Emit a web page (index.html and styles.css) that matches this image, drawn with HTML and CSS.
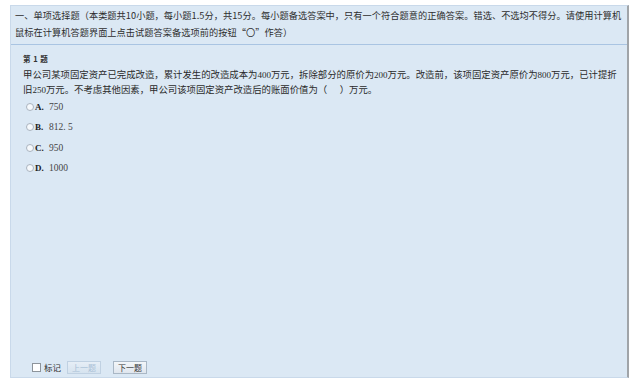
FILE: index.html
```html
<!DOCTYPE html>
<html lang="zh">
<head>
<meta charset="utf-8">
<link rel="stylesheet" href="styles.css">
</head>
<body>
<div class="panel">
  <div class="header">一、单项选择题（本类题共10小题，每小题1.5分，共15分。每小题备选答案中，只有一个符合题意的正确答案。错选、不选均不得分。请使用计算机<br>鼠标在计算机答题界面上点击试题答案备选项前的按钮“〇”作答）</div>
  <div class="content">
    <div class="qno">第 1 题</div>
    <div class="qtext">甲公司某项固定资产已完成改造，累计发生的改造成本为<span class="num">400</span>万元，拆除部分的原价为<span class="num">200</span>万元。改造前，该项固定资产原价为<span class="num">800</span>万元，已计提折<br>旧<span class="num">250</span>万元。不考虑其他因素，甲公司该项固定资产改造后的账面价值为（&nbsp;&nbsp;&nbsp;&nbsp;&nbsp;&nbsp;）万元。</div>
    <div class="options">
      <div class="opt"><span class="radio"></span><b class="letter">A.</b><span class="val">750</span></div>
      <div class="opt"><span class="radio"></span><b class="letter">B.</b><span class="val">812. 5</span></div>
      <div class="opt"><span class="radio"></span><b class="letter">C.</b><span class="val">950</span></div>
      <div class="opt"><span class="radio"></span><b class="letter">D.</b><span class="val">1000</span></div>
    </div>
  </div>
  <div class="footer">
    <span class="check"></span><span class="mark">标记</span>
    <span class="btn disabled">上一题</span>
    <span class="btn">下一题</span>
  </div>
</div>
</body>
</html>
```

FILE: styles.css
```css
html, body {
  margin: 0;
  padding: 0;
  background: #ffffff;
}
body {
  width: 640px;
  height: 385px;
  overflow: hidden;
  font-family: "Noto Sans CJK SC", "Liberation Sans", sans-serif;
  color: #333333;
}
.panel {
  box-sizing: border-box;
  margin: 5px 11px 0 10px;
  height: 373px;
  background: #dbe8f4;
  border: 1px solid #c9d9ea;
  border-right: 2px solid #a0a4a8;
  display: flex;
  flex-direction: column;
}
.header {
  font-size: 9.2px;
  line-height: 17px;
  padding: 1px 4px 3px 4px;
  letter-spacing: 0.05px;
  border-bottom: 1px solid #a9c4e2;
  white-space: nowrap;
  color: #2e2e2e;
}
.content {
  padding: 7px 12px 0 12px;
}
.qno {
  font-size: 7.5px;
  font-weight: bold;
  line-height: 14px;
  word-spacing: 1px;
}
.qtext {
  margin-top: 1px;
  font-size: 9.4px;
  line-height: 14px;
  white-space: nowrap;
  color: #2a2a2a;
}
.num {
  font-family: "Liberation Serif", serif;
  font-size: 9px;
}
.options {
  margin-top: 4px;
  display: flex;
  flex-direction: column;
  gap: 8.3px;
  padding-left: 3px;
}
.opt {
  display: flex;
  align-items: center;
  height: 12px;
  font-size: 9px;
}
.radio {
  width: 6px;
  height: 6px;
  border: 1px solid #aab4bf;
  border-radius: 50%;
  background: #f6f9fc;
  margin-right: 1px;
}
.letter {
  font-family: "Liberation Serif", serif;
  font-size: 9px;
  width: 14px;
  color: #222;
}
.val {
  font-family: "Liberation Serif", serif;
  font-size: 9.5px;
  color: #444;
}
.footer {
  margin-top: auto;
  display: flex;
  align-items: center;
  padding: 0 0 3px 21px;
  height: 14px;
  font-size: 8.5px;
}
.check {
  width: 7px;
  height: 7px;
  border: 1px solid #8d949b;
  background: #ffffff;
  margin-right: 3px;
}
.mark {
  margin-right: 6px;
}
.btn {
  box-sizing: border-box;
  height: 13px;
  width: 34px;
  line-height: 11px;
  text-align: center;
  font-size: 8px;
  border: 1px solid #a9b7c5;
  background: linear-gradient(#f3f6f9, #dfe6ee);
  color: #333;
  margin-right: 12px;
}
.btn.disabled {
  color: #a9c0d6;
  border-color: #c0d1e2;
  background: linear-gradient(#e6eef6, #d6e3ef);
}
```
